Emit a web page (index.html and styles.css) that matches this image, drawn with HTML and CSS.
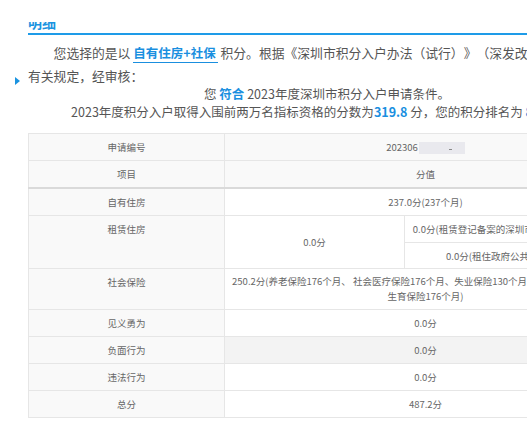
FILE: index.html
```html
<!DOCTYPE html>
<html lang="zh-CN">
<head>
<meta charset="utf-8">
<title>积分明细</title>
<link rel="stylesheet" href="styles.css">
</head>
<body>
<div class="topmask"></div>
<span class="pointer"></span>
<main class="main">
  <h3 class="section-title">明细</h3>
  <p class="intro"><span class="line-one">您选择的是以 <b class="choice">自有住房+社保</b> 积分。根据《深圳市积分入户办法（试行）》（深发改〔2016〕6号）</span><br>有关规定，经审核：</p>
  <div class="result">
    <p class="result-line">您 <b class="hl">符合</b> 2023年度深圳市积分入户申请条件。</p>
    <p class="result-line">2023年度积分入户取得入围前两万名指标资格的分数为<b class="hl">319.8</b> 分，您的积分排名为 <b class="hl">8888</b> 名。</p>
  </div>
  <table class="score">
    <colgroup><col class="c-label"><col class="c-val"><col class="c-sub"></colgroup>
    <tr class="row grey">
      <td class="label">申请编号</td>
      <td class="val" colspan="2">202306<span class="redact"><i></i></span></td>
    </tr>
    <tr class="row grey head">
      <td class="label">项目</td>
      <td class="val" colspan="2">分值</td>
    </tr>
    <tr class="row">
      <td class="label">自有住房</td>
      <td class="val" colspan="2">237.0分(237个月)</td>
    </tr>
    <tr class="row-a">
      <td class="label" rowspan="2">租赁住房</td>
      <td class="val" rowspan="2">0.0分</td>
      <td class="val">0.0分(租赁登记备案的深圳市私人商品住房0个月)</td>
    </tr>
    <tr class="row-b">
      <td class="val">0.0分(租住政府公共租赁房0个月)</td>
    </tr>
    <tr class="row-tall">
      <td class="label">社会保险</td>
      <td class="val wrap" colspan="2">250.2分(养老保险176个月、 社会医疗保险176个月、失业保险130个月、工伤保险176个月、生育保险176个月)</td>
    </tr>
    <tr class="row">
      <td class="label">见义勇为</td>
      <td class="val" colspan="2">0.0分</td>
    </tr>
    <tr class="row">
      <td class="label">负面行为</td>
      <td class="val shade" colspan="2">0.0分</td>
    </tr>
    <tr class="row">
      <td class="label">违法行为</td>
      <td class="val" colspan="2">0.0分</td>
    </tr>
    <tr class="row">
      <td class="label">总分</td>
      <td class="val" colspan="2">487.2分</td>
    </tr>
  </table>
</main>
</body>
</html>
```
FILE: styles.css
```css
html, body {
  margin: 0;
  padding: 0;
  background: #fff;
  overflow: hidden;
}
body {
  font-family: "Microsoft YaHei", "Noto Sans CJK SC", sans-serif;
  color: #555;
  position: relative;
  width: 527px;
  height: 422px;
  text-spacing-trim: space-all;
}
.topmask {
  position: absolute;
  left: 0;
  top: 0;
  width: 527px;
  height: 22px;
  background: #fff;
  z-index: 2;
}
.pointer {
  position: absolute;
  left: 15px;
  top: 77px;
  width: 0;
  height: 0;
  border-left: 5px solid #1a93e0;
  border-top: 4px solid transparent;
  border-bottom: 4px solid transparent;
}
.main {
  margin-left: 28px;
  padding-top: 12px;
  width: 598px;
}
.section-title {
  margin: 0;
  font-size: 14px;
  line-height: 20px;
  font-weight: bold;
  color: #1a93e0;
  padding-bottom: 1px;
  border-bottom: 2px solid #1e9be8;
}
.intro {
  margin: 6px 0 0;
  font-size: 12.8px;
  line-height: 23px;
  text-indent: 2em;
  color: #555;
}
.line-one {
  white-space: nowrap;
}
.choice {
  color: #1a8fdf;
  font-size: 12.5px;
  border-bottom: 1px solid #1a8fdf;
  padding-right: 2px;
}
.result {
  text-align: center;
  font-size: 12.5px;
  line-height: 18px;
  white-space: nowrap;
  margin-top: -2px;
}
.result-line {
  margin: 0;
}
.hl {
  color: #1a8fdf;
  font-size: 12.5px;
}
.score {
  margin-top: 12px;
  width: 598px;
  border-collapse: collapse;
  table-layout: fixed;
  font-size: 9.5px;
  color: #666;
}
.c-label { width: 196px; }
.c-val { width: 180px; }
.c-sub { width: 222px; }
.score td {
  border: 1px solid #e6e6e6;
  padding: 0;
  text-align: center;
  white-space: nowrap;
  overflow: hidden;
}
.score .label {
  background: #f9f9f9;
  vertical-align: top;
  line-height: 26px;
}
.score .val {
  vertical-align: middle;
}
.row { height: 27px; }
.row-a { height: 27px; }
.row-b { height: 26px; }
.row-tall { height: 41px; }
.grey .val { background: #f9f9f9; }
.head td { border-bottom: 2px solid #dadada; }
.score .shade { background: #f3f3f3; }
.score .wrap {
  white-space: normal;
  line-height: 15px;
  padding: 0 7px;
}
.redact {
  display: inline-block;
  vertical-align: middle;
  width: 46px;
  height: 12px;
  margin-left: 1px;
  background: #e9e9ee;
  position: relative;
}
.redact i {
  position: absolute;
  left: 30px;
  top: 7px;
  width: 3px;
  height: 1px;
  background: #888;
}
```
